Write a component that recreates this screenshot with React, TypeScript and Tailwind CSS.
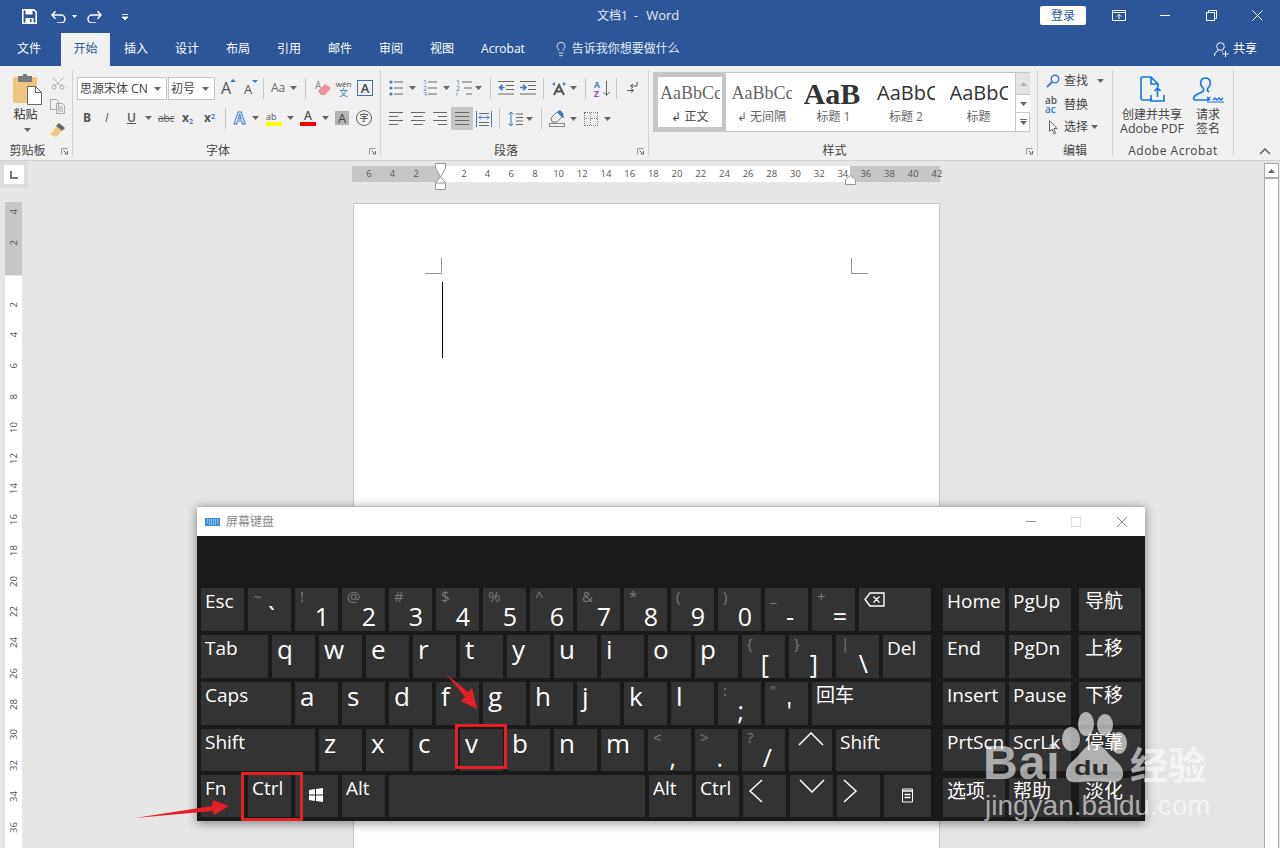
import { Lightbulb, Scissors } from 'lucide-react';
import type { ReactNode } from 'react';

const BLUE = '#2b579a';
const ICON_BLUE = '#3f7cbf';

type KeyDef = {
  w?: string;
  label?: string;
  letter?: string;
  shift?: string;
  main?: string;
  mainCls?: string;
  icon?: ReactNode;
};

function Caret({ className = '' }: { className?: string }) {
  return (
    <svg width="7" height="4" viewBox="0 0 7 4" className={'shrink-0 ' + className}>
      <path d="M0 0h7L3.5 4z" fill="#666" />
    </svg>
  );
}

function Sep({ className = '' }: { className?: string }) {
  return <div className={'w-px h-[21px] bg-[#c6c6c6] shrink-0 ' + className} />;
}

function Launcher() {
  return (
    <svg width="7" height="7" viewBox="0 0 7 7" className="absolute right-[4px] bottom-px">
      <path d="M.5 6.5v-6h6" fill="none" stroke="#999" />
      <path d="M2.5 2.5l3 3M3.5 6h3V3" fill="none" stroke="#666" />
    </svg>
  );
}

function Group({ w, label, children, launcher = true, labelCls = '' }: { w: string; label: string; children: ReactNode; launcher?: boolean; labelCls?: string }) {
  return (
    <div className={'relative flex flex-col shrink-0 border-r border-[#d4d4d4] my-[4px] ' + w}>
      <div className="h-[72px] shrink-0 -mt-[4px] pt-[4px] box-content">{children}</div>
      <div className={'pt-px shrink-0 text-center text-[12px] leading-[16px] text-[#444] whitespace-nowrap ' + (launcher ? 'pr-[17px] ' : '') + labelCls}>{label}</div>
      {launcher && <Launcher />}
    </div>
  );
}

function Lines({ w = 14, kind }: { w?: number; kind: 'left' | 'center' | 'right' | 'full' }) {
  const ys = [1.5, 5.5, 9.5, 13.5];
  const short = w - 5;
  const pos = (i: number) => {
    if (kind === 'full' || i % 2 === 0) return [0, w];
    if (kind === 'left') return [0, short];
    if (kind === 'right') return [w - short, w];
    return [2.5, w - 2.5];
  };
  return (
    <svg width={w} height="15" viewBox={`0 0 ${w} 15`} className="shrink-0">
      {ys.map((y, i) => (
        <path key={y} d={`M${pos(i)[0]} ${y}H${pos(i)[1]}`} stroke="#666" />
      ))}
    </svg>
  );
}

function ListIcon({ kind }: { kind: 'bullet' | 'number' | 'multi' }) {
  const x = kind === 'multi' ? 6 : 5;
  return (
    <svg width={kind === 'multi' ? 16 : 14} height="16" viewBox={`0 0 ${kind === 'multi' ? 16 : 14} 16`} className="shrink-0">
      {[2, 8, 14].map((y, i) => (
        <g key={y}>
          {kind === 'bullet' ? (
            <circle cx="2" cy={y} r="1.6" fill={ICON_BLUE} />
          ) : (
            <text x="0" y={y + 2.5} fontSize="7" fill={ICON_BLUE}>{kind === 'multi' && i === 2 ? 'i' : i + 1}</text>
          )}
          <path d={`M${kind === 'multi' ? x + i * 2 : x} ${y}H${kind === 'multi' ? 16 : 14}`} stroke="#666" />
        </g>
      ))}
    </svg>
  );
}

function IndentIcon({ dir }: { dir: 'in' | 'out' }) {
  return (
    <svg width="16" height="14" viewBox="0 0 16 14" className="shrink-0">
      <path d="M0 .5h16M8 4.5h8M8 8.5h8M0 13h16" stroke="#666" />
      {dir === 'out' ? (
        <path d="M6.5 6.5H2M4.5 3.8L1.5 6.5l3 2.7" fill="none" stroke={ICON_BLUE} strokeWidth="1.6" />
      ) : (
        <path d="M0 6.5h5M3 3.8l3 2.7-3 2.7" fill="none" stroke={ICON_BLUE} strokeWidth="1.6" />
      )}
    </svg>
  );
}

function FontRow1() {
  return (
    <div className="flex items-center h-[22px] mt-[7px]">
      <div className="ml-[4px] w-[90px] h-[23px] bg-white border border-[#c6c6c6] flex items-center pl-[2px] pr-[5px] text-[12px] leading-[20px] pt-px text-[#444] shrink-0">
        <span className="flex-1 whitespace-nowrap overflow-hidden">思源宋体 CN</span>
        <Caret />
      </div>
      <div className="ml-[1px] w-[47px] h-[23px] bg-white border border-[#c6c6c6] flex items-center pl-[2px] pr-[5px] text-[12px] leading-[20px] pt-px text-[#444] shrink-0">
        <span className="flex-1">初号</span>
        <Caret />
      </div>
      <div className="ml-[6px] w-[14px] relative text-[16px] leading-[16px] text-[#555]">
        A
        <span className="absolute -right-px -top-px border-x-[3px] border-x-transparent border-b-[3px] border-b-[#3f7cbf]" />
      </div>
      <div className="ml-[9px] w-[12px] relative text-[13px] leading-[13px] text-[#555] mt-[2px]">
        A
        <span className="absolute -right-[2px] -top-[3px] border-x-[3px] border-x-transparent border-t-[3px] border-t-[#3f7cbf]" />
      </div>
      <Sep className="ml-[7px]" />
      <span className="ml-[7px] w-[16px] text-[12px] text-[#666] whitespace-nowrap">Aa</span>
      <Caret className="ml-[3px]" />
      <Sep className="ml-[8px]" />
      <svg width="17" height="16" viewBox="0 0 17 16" className="ml-[9px] shrink-0">
        <text x="0" y="9" fontSize="10" fill="#888">A</text>
        <path d="M3 11l7-7 6 4-6 7H6z" fill="#ef8e9c" />
      </svg>
      <div className="ml-[4px] w-[15px] flex flex-col items-center leading-[10px]">
        <span className="text-[8px] leading-[9px] text-[#444]">wén</span>
        <span className="text-[9px] leading-[10px] text-[#3f7cbf]">文</span>
      </div>
      <div className="ml-[6px] w-[16px] h-[16px] border border-[#3f6fa8] flex items-center justify-center text-[13px] leading-[14px] text-[#444] font-semibold">A</div>
    </div>
  );
}

function FontRow2() {
  return (
    <div className="flex items-center h-[22px] mt-[8px] text-[#555]">
      <span className="ml-[10px] w-[8px] text-[12px] font-bold">B</span>
      <span className="ml-[14px] w-[8px] text-[12px] italic">I</span>
      <span className="ml-[14px] w-[8px] text-[12px] font-semibold underline">U</span>
      <Caret className="ml-[10px]" />
      <span className="ml-[6px] w-[16px] text-[10px] line-through">abc</span>
      <span className="ml-[8px] w-[12px] text-[12px] font-bold whitespace-nowrap">x<sub className="text-[7px] text-[#3f7cbf]">2</sub></span>
      <span className="ml-[10px] w-[12px] text-[12px] font-bold whitespace-nowrap">x<sup className="text-[7px] text-[#3f7cbf]">2</sup></span>
      <Sep className="ml-[9px]" />
      <span className="ml-[8px] w-[14px] text-[16px] leading-[18px] font-bold text-white [-webkit-text-stroke:1px_#3f7cbf]">A</span>
      <Caret className="ml-[4px]" />
      <div className="ml-[7px] w-[16px] flex flex-col">
        <span className="text-[9px] leading-[11px] text-[#555]">ab</span>
        <span className="h-[4px] bg-[#ffff00]" />
      </div>
      <Caret className="ml-[5px]" />
      <div className="ml-[6px] w-[16px] flex flex-col items-center">
        <span className="text-[12px] leading-[12px] font-semibold text-[#555]">A</span>
        <span className="h-[4px] w-full bg-[#ff0000]" />
      </div>
      <Caret className="ml-[6px]" />
      <div className="ml-[6px] w-[14px] h-[14px] bg-[#b4b4b4] text-[13px] leading-[14px] text-center text-[#444]">A</div>
      <div className="ml-[7px] w-[16px] h-[16px] rounded-full border border-[#666] text-[9px] leading-[14px] text-center text-[#444]">字</div>
    </div>
  );
}

function ParaRow1() {
  return (
    <div className="flex items-center h-[22px] mt-[7px]">
      <div className="ml-[8px]"><ListIcon kind="bullet" /></div>
      <Caret className="ml-[6px]" />
      <div className="ml-[7px]"><ListIcon kind="number" /></div>
      <Caret className="ml-[6px]" />
      <div className="ml-[6px]"><ListIcon kind="multi" /></div>
      <Caret className="ml-[3px]" />
      <Sep className="ml-[8px]" />
      <div className="ml-[7px]"><IndentIcon dir="out" /></div>
      <div className="ml-[6px]"><IndentIcon dir="in" /></div>
      <Sep className="ml-[7px]" />
      <svg width="16" height="15" viewBox="0 0 16 15" className="ml-[7px] shrink-0">
        <path d="M3 14L8 4l5 10M5 10.5h6" fill="none" stroke="#555" strokeWidth="2" />
        <path d="M1 3l3-2v4zM15 3l-3-2v4z" fill={ICON_BLUE} />
      </svg>
      <Caret className="ml-[3px]" />
      <Sep className="ml-[8px]" />
      <svg width="16" height="17" viewBox="0 0 16 17" className="ml-[8px] shrink-0">
        <text x="0" y="7.5" fontSize="8.5" fontWeight="700" fill={ICON_BLUE}>A</text>
        <text x="0" y="16.5" fontSize="8.5" fontWeight="700" fill="#9b4fb5">Z</text>
        <path d="M12.5 1v14M9.5 12l3 3.5 3-3.5" fill="none" stroke="#666" />
      </svg>
      <Sep className="ml-[6px]" />
      <svg width="11" height="14" viewBox="0 0 11 14" className="ml-[10px] shrink-0">
        <path d="M10 1v4H4M6 3L3.5 5 6 7" fill="none" stroke="#555" />
        <path d="M0 9.5h6M4 7.5l2.5 2-2.5 2" fill="none" stroke="#555" />
      </svg>
    </div>
  );
}

function ParaRow2() {
  return (
    <div className="flex items-center h-[23px] mt-[8px]">
      <div className="ml-[8px]"><Lines kind="left" /></div>
      <div className="ml-[8px]"><Lines kind="center" /></div>
      <div className="ml-[8px]"><Lines kind="right" /></div>
      <div className="ml-[4px] w-[22px] h-[23px] bg-[#c6c6c6] flex items-center justify-center shrink-0"><Lines kind="full" /></div>
      <svg width="16" height="16" viewBox="0 0 16 16" className="ml-[3px] shrink-0">
        <path d="M.5 0v16M15.5 0v16" stroke={ICON_BLUE} />
        <path d="M3 2.5h10M3 11.5h10M3 14.5h10" stroke="#666" />
        <path d="M3 6.5h10M5 4.5l-2 2 2 2M11 4.5l2 2-2 2" fill="none" stroke={ICON_BLUE} />
      </svg>
      <Sep className="ml-[7px]" />
      <svg width="15" height="16" viewBox="0 0 15 16" className="ml-[8px] shrink-0">
        <path d="M3 1v14M.5 3.5L3 1l2.5 2.5M.5 12.5L3 15l2.5-2.5" fill="none" stroke={ICON_BLUE} />
        <path d="M8 3h7M8 6.5h7M8 10h7M8 13.5h7" stroke="#666" />
      </svg>
      <Caret className="ml-[3px]" />
      <Sep className="ml-[8px]" />
      <svg width="16" height="17" viewBox="0 0 16 17" className="ml-[7px] shrink-0">
        <path d="M2 8l6-6 5 5-5 5H3z" fill="none" stroke="#777" />
        <path d="M8 2l5 5 2 1-1-5-3-3z" fill={ICON_BLUE} />
        <rect x=".5" y="13.5" width="15" height="3" fill="none" stroke="#888" />
      </svg>
      <Caret className="ml-[5px]" />
      <div className="ml-[7px] w-[14px] h-[14px] border border-dotted border-[#777] grid grid-cols-2 grid-rows-2 shrink-0">
        <div className="border-r border-b border-dotted border-[#999]" />
        <div className="border-b border-dotted border-[#999]" />
        <div className="border-r border-dotted border-[#999]" />
        <div />
      </div>
      <Caret className="ml-[6px]" />
    </div>
  );
}

function StyleItem({ w, preview, label, previewCls, selected = false }: { w: string; preview: string; label: string; previewCls: string; selected?: boolean }) {
  return (
    <div className={'flex flex-col items-center shrink-0 h-[58px] ' + w + (selected ? ' border-[4px] border-[#c6c6c6]' : ' pt-[4px]')}>
      <div className={'h-[32px] overflow-hidden whitespace-nowrap flex items-center justify-start ' + previewCls}>{preview}</div>
      <div className={'text-[12px] leading-[16px] whitespace-nowrap' + (selected ? ' text-[#444]' : ' text-[#666]')}>{label}</div>
    </div>
  );
}

function StyleGallery() {
  return (
    <div className="ml-[4px] mt-[2px] w-[377px] h-[60px] bg-white border border-[#c6c6c6] flex">
      <StyleItem selected w="w-[72px]" preview="AaBbCc" label="↲ 正文" previewCls="w-[60px] [font-family:'Liberation_Serif',serif] text-[18px] text-[#666]" />
      <StyleItem w="w-[71px]" preview="AaBbCc" label="↲ 无间隔" previewCls="w-[60px] [font-family:'Liberation_Serif',serif] text-[18px] text-[#666]" />
      <StyleItem w="w-[73px]" preview="AaB" label="标题 1" previewCls="w-[60px] [font-family:'Liberation_Serif',serif] text-[30px] font-bold text-[#333]" />
      <StyleItem w="w-[72px]" preview="AaBbC" label="标题 2" previewCls="w-[58px] text-[20px] text-[#333]" />
      <StyleItem w="w-[73px]" preview="AaBbC" label="标题" previewCls="w-[58px] text-[20px] text-[#333]" />
      <div className="flex flex-col w-[15px] border-l border-[#c6c6c6] shrink-0">
        <div className="h-[21px] bg-[#e4e4e4] flex items-center justify-center">
          <Caret className="rotate-180 opacity-40" />
        </div>
        <div className="h-[19px] bg-white border-y border-[#c6c6c6] flex items-center justify-center"><Caret /></div>
        <div className="flex-1 flex flex-col gap-[1px] items-center justify-center">
          <div className="w-[7px] h-px bg-[#666]" />
          <Caret />
        </div>
      </div>
    </div>
  );
}

function EditGroup() {
  return (
    <div className="flex flex-col text-[12px] text-[#444] -mt-[1px]">
      <div className="flex items-center h-[23px] pl-[8px]">
        <svg width="14" height="14" viewBox="0 0 14 14" className="shrink-0">
          <circle cx="9" cy="5" r="3.8" fill="none" stroke={ICON_BLUE} strokeWidth="1.4" />
          <path d="M6 8l-5 5" stroke={ICON_BLUE} strokeWidth="2" />
        </svg>
        <span className="ml-[4px] w-[24px]">查找</span>
        <Caret className="ml-[9px]" />
      </div>
      <div className="flex items-center h-[23px] mt-px pl-[7px]">
        <div className="w-[15px] flex flex-col text-[10px] leading-[9px] font-semibold">
          <span className="text-[#555]">ab</span>
          <span className="text-[#3f7cbf]">ac</span>
        </div>
        <span className="ml-[4px] w-[24px]">替换</span>
      </div>
      <div className="flex items-center h-[22px] pl-[11px]">
        <svg width="9" height="15" viewBox="0 0 9 15" className="shrink-0">
          <path d="M.5.5v11l2.6-2.3 1.9 4.6 1.6-.7-1.9-4.5h3.3z" fill="white" stroke="#666" />
        </svg>
        <span className="ml-[6px] w-[24px]">选择</span>
        <Caret className="ml-[3px]" />
      </div>
    </div>
  );
}

function AcrobatGroup() {
  return (
    <div className="flex text-[12px] leading-[14px] text-[#444] pt-[6px]">
      <div className="w-[76px] ml-[1px] flex flex-col items-center">
        <svg width="25" height="27" viewBox="0 0 25 27" className="shrink-0">
          <path d="M12 24H2.5a1.5 1.5 0 0 1-1.5-1.5v-20A1.5 1.5 0 0 1 2.500 1H11l7 7v3" fill="none" stroke="#1473e6" strokeWidth="1.6" />
          <path d="M11 1v7h7" fill="none" stroke="#1473e6" strokeWidth="1.6" />
          <path d="M11 19v6h13v-6M17.500 21v-9M14.500 15l3-3 3 3" fill="none" stroke="#1473e6" strokeWidth="1.6" />
        </svg>
        <span className="mt-[5px] whitespace-nowrap">创建并共享</span>
        <span className="whitespace-nowrap text-[12.5px]">Adobe PDF</span>
      </div>
      <div className="w-[34px] ml-[1px] flex flex-col items-center">
        <svg width="33" height="27" viewBox="0 0 33 27" className="shrink-0">
          <path d="M17 16c-2-1-2-3-1-4 2-2 3-4 2-7-1-4-8-4-9 0-1 3 0 5 2 7 1 1 1 3-1 4l-6 3c-3 2-3 5-1 5h14" fill="none" stroke="#1473e6" strokeWidth="1.6" />
          <path d="M15 21l3 3m0-3l-3 3M21 24l2-2 2 2 2-2 2 2 2-2" fill="none" stroke="#1473e6" strokeWidth="1.3" />
          <path d="M15 26h17" stroke="#1473e6" />
        </svg>
        <span className="mt-[5px]">请求</span>
        <span>签名</span>
      </div>
    </div>
  );
}

function ClipboardGroup() {
  return (
    <div className="flex">
      <div className="ml-[13px] w-[28px] flex flex-col items-center pt-[4px]">
        <svg width="29" height="32" viewBox="0 0 29 32" className="shrink-0">
          <rect x="0" y="3" width="24" height="26" rx="1" fill="#eec67f" />
          <rect x="5" y="2" width="14" height="6" fill="#7a7a7a" />
          <rect x="10" y="0" width="4" height="3" fill="#7a7a7a" />
          <path d="M14.500 12.500h8l6 6v12h-14z" fill="white" stroke="#666" />
          <path d="M22.500 12.500v6h6" fill="none" stroke="#666" />
        </svg>
        <span className="mt-[1px] -ml-[3px] text-[12px] leading-[16px] text-[#333] whitespace-nowrap">粘贴</span>
        <Caret className="mt-[5px]" />
      </div>
      <div className="ml-[8px] flex flex-col items-center pt-[5px]">
        <Scissors size={16} strokeWidth={1.4} color="#a8a8a8" className="-rotate-90" />
        <svg width="15" height="15" viewBox="0 0 15 15" className="mt-[8px]">
          <path d="M.5.5h6l2 2v8h-8zM6.500 4.500h6l2 2v8h-8z" fill="#f1f1f1" stroke="#aaa" />
          <path d="M8 8h5M8 10h5M8 12h5" stroke="#aaa" />
        </svg>
        <svg width="17" height="15" viewBox="0 0 17 15" className="mt-[8px]">
          <path d="M10 1l6 5-3 3-6-5z" fill="#666" />
          <path d="M7 4l6 5-6 6-7-3c3 0 5-4 7-8z" fill="#eec67f" />
        </svg>
      </div>
    </div>
  );
}

function Ribbon() {
  return (
    <div className="h-[95px] bg-[#f1f1f1] border-b border-[#d0d0d0] flex shrink-0">
      <Group w="w-[73px]" label="剪贴板"><ClipboardGroup /></Group>
      <Group w="w-[308px]" label="字体"><FontRow1 /><FontRow2 /></Group>
      <Group w="w-[268px]" label="段落"><ParaRow1 /><ParaRow2 /></Group>
      <Group w="w-[389px]" label="样式"><StyleGallery /></Group>
      <Group w="w-[75px]" label="编辑" launcher={false}><EditGroup /></Group>
      <Group w="w-[121px]" label="Adobe Acrobat" launcher={false} labelCls="tracking-[0.5px]"><AcrobatGroup /></Group>
      <div className="flex-1 flex items-end justify-end pr-[9px] pb-[5px]">
        <svg width="12" height="7" viewBox="0 0 12 7">
          <path d="M1 6l5-5 5 5" fill="none" stroke="#666" strokeWidth="1.6" />
        </svg>
      </div>
    </div>
  );
}

function TitleBar() {
  return (
    <div className="h-[33px] flex items-center text-white shrink-0">
      <svg width="15" height="15" viewBox="0 0 15 15" className="ml-[22px] shrink-0">
        <path d="M.8.8h11l2.400 2.400v11H.8z" fill="none" stroke="white" strokeWidth="1.6" />
        <rect x="3.5" y="1" width="7" height="4.5" fill="white" />
        <rect x="3.5" y="9" width="8" height="5" fill="white" />
        <rect x="8" y="10" width="1.6" height="3" fill={BLUE} />
      </svg>
      <svg width="15" height="13" viewBox="0 0 15 13" className="ml-[14px] shrink-0">
        <path d="M1 5h9a4 4 0 0 1 0 8H6M4.500 1.200L1 5l3.500 3.800" fill="none" stroke="white" strokeWidth="1.5" />
      </svg>
      <svg width="5" height="3" viewBox="0 0 5 3" className="ml-[6px] shrink-0"><path d="M0 0h5L2.500 3z" fill="white" /></svg>
      <svg width="15" height="13" viewBox="0 0 15 13" className="ml-[10px] shrink-0">
        <path d="M14 5H5a4 4 0 0 0 0 8h4M10.500 1.200L14 5l-3.500 3.800" fill="none" stroke="white" strokeWidth="1.5" />
      </svg>
      <svg width="6" height="6" viewBox="0 0 6 6" className="ml-[20px] shrink-0"><path d="M0 .5h6M0 3h6L3 6z" stroke="white" fill="white" strokeWidth=".8" /></svg>
      <div className="ml-[469px] -mt-[2px] text-[12px] text-[#e6ecf5] whitespace-pre w-[85px]">文档1  -  <span className="ml-[2px] text-[13px]">Word</span></div>
      <div className="ml-[358px] -mt-[2px] w-[46px] h-[19px] bg-white rounded-[2px] text-[12px] leading-[19px] text-center text-[#2b579a]">登录</div>
      <svg width="14" height="11" viewBox="0 0 14 11" className="ml-[26px] -mt-[2px] shrink-0">
        <path d="M.5.5h13v10H.5zM1 2.500h12M7 9V4.500M5 6.500l2-2 2 2" fill="none" stroke="white" />
      </svg>
      <div className="ml-[34px] -mt-[2px] w-[10px] h-px bg-white" />
      <svg width="11" height="11" viewBox="0 0 11 11" className="ml-[36px] -mt-[2px] shrink-0">
        <path d="M.5 2.500h8v8h-8zM2.500 2.500v-2h8v8h-2" fill="none" stroke="white" />
      </svg>
      <svg width="11" height="11" viewBox="0 0 11 11" className="ml-[35px] -mt-[2px] shrink-0">
        <path d="M.5.5l10 10M10.500.5l-10 10" stroke="white" />
      </svg>
    </div>
  );
}

function TabBar() {
  const tabs = ['插入', '设计', '布局', '引用', '邮件', '审阅', '视图', 'Acrobat'];
  return (
    <div className="h-[33px] flex text-[12px] text-white shrink-0">
      <div className="w-[61px] pl-[17px] leading-[32px]">文件</div>
      <div className="w-[49px] bg-[#f1f1f1] text-[#2b579a] text-center leading-[32px]">开始</div>
      <div className="flex pl-[14px]">
        {tabs.map(t => (
          <div key={t} className="pr-[27px] leading-[32px] whitespace-nowrap">{t}</div>
        ))}
      </div>
      <div className="flex items-center h-[32px] ml-[1px]">
        <Lightbulb size={16} strokeWidth={1.2} color="white" />
        <span className="ml-[3px] whitespace-nowrap text-[#e6ecf5]">告诉我你想要做什么</span>
      </div>
      <div className="ml-auto flex items-center h-[32px] pr-[23px]">
        <svg width="15" height="15" viewBox="0 0 15 15" className="shrink-0">
          <circle cx="6.5" cy="4.5" r="3.8" fill="none" stroke="white" />
          <path d="M.5 14c0-3 2-5 4-5.500M8 9.500l1 .5M11.500 9v6M8.500 12h6" fill="none" stroke="white" />
        </svg>
        <span className="ml-[4px]">共享</span>
      </div>
    </div>
  );
}

function HRuler() {
  const cell = 'w-[23.7px] text-center shrink-0';
  return (
    <div className="relative ml-[324px] mt-[5px] w-[588px] h-[16px] flex text-[9.5px] leading-[16px] text-[#555] shrink-0">
      <div className="w-[88px] bg-[#c6c6c6] flex pl-[5px]">
        {[6, 4, 2].map(n => <div key={n} className={cell}>{n}</div>)}
      </div>
      <div className="w-[410px] bg-white flex pl-[12px]">
        {[2, 4, 6, 8, 10, 12, 14, 16, 18, 20, 22, 24, 26, 28, 30, 32, 34].map(n => <div key={n} className={cell}>{n}</div>)}
      </div>
      <div className="w-[90px] bg-[#c6c6c6] flex pl-[4px]">
        {[36, 38, 40, 42].map(n => <div key={n} className={cell}>{n}</div>)}
      </div>
      <svg width="12" height="27" viewBox="0 0 12 27" className="absolute left-[83px] -top-[3px]">
        <path d="M.5.5h10V5l-5 9-5-9z" fill="white" stroke="#999" />
        <path d="M5.500 14l5 6v6.500H.5V20zM.5 20h10" fill="white" stroke="#999" />
      </svg>
      <svg width="12" height="10" viewBox="0 0 12 10" className="absolute left-[493px] top-[9px]">
        <path d="M5.500.5l5 4v5H.5v-5z" fill="white" stroke="#999" />
      </svg>
    </div>
  );
}

function VRuler() {
  const nums = [2, 4, 6, 8, 10, 12, 14, 16, 18, 20, 22, 24, 26, 28, 30, 32, 34, 36];
  const num = "[writing-mode:vertical-rl] rotate-180 text-[9.5px] leading-[17px] text-[#555]";
  return (
    <div className="ml-[5px] mt-[14px] w-[17px] flex flex-col flex-1 min-h-0 overflow-hidden">
      <div className="h-[73px] bg-[#c6c6c6] flex flex-col items-center shrink-0">
        <div className="h-[20px] flex items-center justify-center"><span className={num}>4</span></div>
        <div className="h-[41px] flex items-center justify-center"><span className={num}>2</span></div>
      </div>
      <div className="mt-px bg-white flex-1 flex flex-col items-center pt-[13px]">
        {nums.map(n => (
          <div key={n} className="h-[30.75px] flex items-center justify-center shrink-0"><span className={num}>{n}</span></div>
        ))}
      </div>
    </div>
  );
}

function Paper() {
  return (
    <div className="ml-[325px] mt-[21px] w-[587px] flex-1 bg-white border-t border-x border-[#c6c6c6] px-[71px] pt-[54px]">
      <div className="flex justify-between">
        <div className="w-[17px] h-[16px] border-r border-b border-[#999]" />
        <div className="w-[17px] h-[16px] border-l border-b border-[#999]" />
      </div>
      <div className="ml-[17px] mt-[8px] w-px h-[76px] bg-black" />
    </div>
  );
}

function Workspace() {
  return (
    <div className="flex-1 min-h-0 bg-[#e6e6e6] flex">
      <div className="w-[28px] flex flex-col shrink-0">
        <div className="h-[27px] w-[28px] bg-[#dcdcdc] pl-[4px] pt-[4px] shrink-0">
          <div className="w-[20px] h-[19px] bg-white flex items-center justify-center">
            <div className="w-[8px] h-[8px] border-l-2 border-b-2 border-[#777] mt-[1px]" />
          </div>
        </div>
        <VRuler />
      </div>
      <div className="flex-1 flex flex-col min-w-0">
        <HRuler />
        <Paper />
      </div>
      <div className="w-[15px] mr-px mt-[2px] flex flex-col bg-white border-x border-[#ababab] shrink-0">
        <div className="h-[16px] border-t border-b-2 border-[#ababab] flex items-center justify-center">
          <Caret className="rotate-180" />
        </div>
      </div>
    </div>
  );
}

function Chevron({ d, w, h }: { d: string; w: number; h: number }) {
  return (
    <svg width={w} height={h} viewBox={`0 0 ${w} ${h}`}>
      <path d={d} fill="none" stroke="white" strokeWidth="1.5" />
    </svg>
  );
}

const sym = (shift: string, main: string, mainCls = 'pr-[9px]'): KeyDef => ({ shift, main, mainCls });
const ltr = (letter: string): KeyDef => ({ letter });

const ROWS: { h: string; keys: KeyDef[] }[] = [
  {
    h: 'h-[43px]',
    keys: [
      { label: 'Esc' }, sym('~', '`', 'pr-[16px]'), sym('!', '1'), sym('@', '2'), sym('#', '3'), sym('$', '4'), sym('%', '5'),
      sym('^', '6'), sym('&', '7'), sym('*', '8'), sym('(', '9'), sym(')', '0'), sym('_', '-', 'pr-[14px]'), sym('+', '=', 'pr-[8px]'),
      {
        w: 'w-[72px]',
        icon: (
          <svg width="21" height="15" viewBox="0 0 21 15" className="ml-[5px] mt-[4px]">
            <path d="M6 1h14v13H6L1 7.500zM9.500 4.500l6 6M15.500 4.500l-6 6" fill="none" stroke="white" strokeWidth="1.4" />
          </svg>
        ),
      },
    ],
  },
  {
    h: 'h-[43px]',
    keys: [
      { label: 'Tab', w: 'w-[67px]' }, ltr('q'), ltr('w'), ltr('e'), ltr('r'), ltr('t'), ltr('y'), ltr('u'), ltr('i'), ltr('o'), ltr('p'),
      sym('{', '[', 'pr-[16px]'), sym('}', ']', 'pr-[14px]'), sym('|', '\\', 'pr-[11px]'), { label: 'Del', w: 'w-[48px]' },
    ],
  },
  {
    h: 'h-[43px]',
    keys: [
      { label: 'Caps', w: 'w-[90px]' }, ltr('a'), ltr('s'), ltr('d'), ltr('f'), ltr('g'), ltr('h'), ltr('j'), ltr('k'), ltr('l'),
      sym(':', ';', 'pr-[17px]'), sym('"', "'", 'pr-[16px]'), { label: '回车', w: 'w-[119px]' },
    ],
  },
  {
    h: 'h-[42px]',
    keys: [
      { label: 'Shift', w: 'w-[114px]' }, ltr('z'), ltr('x'), ltr('c'), ltr('v'), ltr('b'), ltr('n'), ltr('m'),
      sym('<', ',', 'pr-[15px]'), sym('>', '.', 'pr-[15px]'), sym('?', '/', 'pr-[13px]'),
      { icon: <div className="flex justify-center pt-[3px]"><Chevron w={26} h={14} d="M1 13L13 1l12 12" /></div> },
      { label: 'Shift', w: 'w-[95px]' },
    ],
  },
  {
    h: 'h-[42px]',
    keys: [
      { label: 'Fn' }, { label: 'Ctrl' },
      {
        icon: (
          <svg width="14" height="14" viewBox="0 0 14 14" className="ml-[14px] mt-[13px]">
            <path d="M0 2l6-1v5.500H0zM7 1l7-1v6.500H7zM0 7.500h6V13l-6-1zM7 7.500h7V14l-7-1z" fill="white" />
          </svg>
        ),
      },
      { label: 'Alt' }, { w: 'w-[256px]' }, { label: 'Alt' }, { label: 'Ctrl' },
      { icon: <div className="pl-[5px] pt-[4px]"><Chevron w={15} h={24} d="M14 1L2 12l12 11" /></div> },
      { icon: <div className="flex justify-center pt-[4px]"><Chevron w={26} h={14} d="M1 1l12 12L25 1" /></div> },
      { icon: <div className="pl-[6px] pt-[4px]"><Chevron w={15} h={24} d="M1 1l12 11L1 23" /></div> },
      {
        w: 'w-[47px]',
        icon: (
          <svg width="11" height="15" viewBox="0 0 11 15" className="ml-[18px] mt-[13px]">
            <path d="M.5 1h10v13H.5z" fill="none" stroke="white" />
            <path d="M0 3h11M2.500 6.500h6M2.500 9.500h6" stroke="white" strokeWidth="1.300" />
          </svg>
        ),
      },
    ],
  },
];

const SIDE_KEYS: string[][] = [
  ['Home', 'PgUp', '导航'],
  ['End', 'PgDn', '上移'],
  ['Insert', 'Pause', '下移'],
  ['PrtScn', 'ScrLk', '停靠'],
  ['选项', '帮助', '淡化'],
];

function Key({ def }: { def: KeyDef }) {
  return (
    <div className={'bg-[#333333] text-white shrink-0 overflow-hidden ' + (def.w ?? 'w-[43px]')}>
      {def.label && <div className="pl-[4px] pt-px text-[19px] leading-[24px] whitespace-nowrap">{def.label}</div>}
      {def.letter && <div className="pl-[5px] text-[26px] leading-[28px]">{def.letter}</div>}
      {def.icon}
      {def.shift && (
        <div className="flex flex-col h-full">
          <div className="pl-[5px] text-[15px] leading-[15px] pt-px text-[#7a7a7a]">{def.shift}</div>
          <div className={'self-end text-[25px] leading-[24px] ' + def.mainCls}>{def.main}</div>
        </div>
      )}
    </div>
  );
}

function Keyboard() {
  return (
    <div className="absolute left-[197px] top-[506px] w-[948px] h-[315px] bg-[#1a1a1a] shadow-[0_2px_10px_rgba(0,0,0,0.45)] border-t border-[#bbbbbb] flex flex-col">
      <div className="h-[29px] bg-white flex items-center shrink-0">
        <svg width="15" height="8" viewBox="0 0 15 8" className="ml-[8px] shrink-0">
          <rect width="15" height="8" fill="#3f8fd8" />
          <path d="M2 2h11M2 4h11M4 6h7" stroke="white" strokeWidth=".8" strokeDasharray="1 1" />
        </svg>
        <span className="ml-[6px] text-[12px] text-[#8a8a8a]">屏幕键盘</span>
        <div className="ml-auto w-[10px] h-px bg-[#999]" />
        <div className="ml-[35px] w-[10px] h-[10px] border border-[#dddddd]" />
        <svg width="10" height="10" viewBox="0 0 10 10" className="ml-[36px] mr-[18px] shrink-0">
          <path d="M0 0l10 10M10 0L0 10" stroke="#888" />
        </svg>
      </div>
      <div className="flex pl-[4px] pt-[52px]">
        <div className="flex flex-col gap-[4px] w-[730px] shrink-0">
          {ROWS.map((r, i) => (
            <div key={i} className={'flex gap-[4px] ' + r.h}>
              {r.keys.map((k, j) => <Key key={j} def={k} />)}
            </div>
          ))}
        </div>
        <div className="ml-[12px] flex flex-col gap-[4px]">
          {SIDE_KEYS.map((row, i) => (
            <div key={i} className={'flex ' + (i === 3 ? 'h-[42px]' : i === 4 ? 'mt-[3px] h-[39px]' : 'h-[43px]')}>
              {row.map((t, j) => (
                <div key={t} className={'w-[62px] bg-[#333333] text-white pt-px text-[19px] leading-[24px] whitespace-nowrap overflow-hidden ' + (j === 1 ? 'ml-[4px] pl-[4px]' : j === 2 ? 'ml-[8px] pl-[6px]' : 'pl-[4px]')}>
                  {t}
                </div>
              ))}
            </div>
          ))}
        </div>
      </div>
    </div>
  );
}

function Annotations() {
  return (
    <>
      <div className="absolute left-[455px] top-[724px] w-[52px] h-[45px] border-[3px] border-[#e61e28]" />
      <div className="absolute left-[241px] top-[772px] w-[62px] h-[49px] border-[3px] border-[#e61e28]" />
      <svg width="1280" height="848" viewBox="0 0 1280 848" className="absolute left-0 top-0 pointer-events-none">
        <path d="M446 674L468 692L472 688L477 709L461 701L465 697Z" fill="#e61e28" />
        <path d="M135 818L212 806L213 800L229 806L214 815L213 811Z" fill="#e61e28" />
      </svg>
    </>
  );
}

function Watermark() {
  return (
    <div className="absolute left-[960px] top-[700px] w-[320px] h-[148px] pointer-events-none [font-family:'Liberation_Sans',Arial,sans-serif]">
      <svg width="320" height="148" viewBox="0 0 320 148" className="absolute left-0 top-0">
        <g fill="white" fillOpacity=".62">
          <ellipse cx="126" cy="24" rx="8" ry="12" />
          <ellipse cx="145" cy="25" rx="8" ry="11" />
          <ellipse cx="111" cy="39" rx="9" ry="12" />
          <ellipse cx="159" cy="43" rx="8" ry="11" />
          <path d="M134 44c-8 0-12 8-18 14-6 5-11 10-10 18 1 6 7 7 14 6 9-1 19-1 28 0 7 1 14 0 15-7 1-8-5-12-10-17-6-5-10-14-19-14z" />
        </g>
        <text x="114" y="75" fontSize="21" fontWeight="700" textLength="35" lengthAdjust="spacingAndGlyphs" fill="#2c2c2c" fontFamily="'Liberation Sans',Arial,sans-serif">du</text>
      </svg>
      <div className="absolute left-[23px] top-[38px] text-[48px] leading-[50px] font-bold tracking-[1px] text-white/60">Bai</div>
      <div className="absolute left-[170px] top-[41px] text-[38px] leading-[44px] font-bold text-white/60 whitespace-nowrap [font-family:'Noto_Sans_CJK_SC',sans-serif]">经验</div>
      <div className="absolute left-[25px] top-[90px] text-[28px] leading-[32px] text-white/60 whitespace-nowrap">jingyan.baidu.com</div>
    </div>
  );
}

export default function App() {
  return (
    <div className="relative w-[1280px] h-[848px] overflow-hidden flex flex-col bg-[#2b579a] [font-family:'Open_Sans','Noto_Sans_CJK_SC',sans-serif]">
      <TitleBar />
      <TabBar />
      <Ribbon />
      <Workspace />
      <Keyboard />
      <Annotations />
      <Watermark />
    </div>
  );
}
